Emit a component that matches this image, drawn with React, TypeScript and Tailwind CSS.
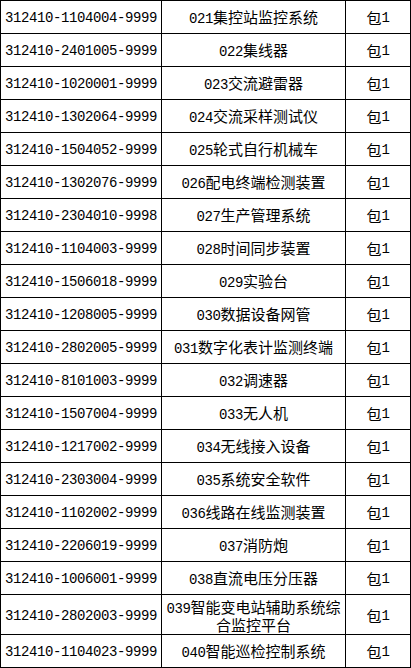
import React from 'react'

const rows = [
  ['312410-1104004-9999', '021集控站监控系统'],
  ['312410-2401005-9999', '022集线器'],
  ['312410-1020001-9999', '023交流避雷器'],
  ['312410-1302064-9999', '024交流采样测试仪'],
  ['312410-1504052-9999', '025轮式自行机械车'],
  ['312410-1302076-9999', '026配电终端检测装置'],
  ['312410-2304010-9998', '027生产管理系统'],
  ['312410-1104003-9999', '028时间同步装置'],
  ['312410-1506018-9999', '029实验台'],
  ['312410-1208005-9999', '030数据设备网管'],
  ['312410-2802005-9999', '031数字化表计监测终端'],
  ['312410-8101003-9999', '032调速器'],
  ['312410-1507004-9999', '033无人机'],
  ['312410-1217002-9999', '034无线接入设备'],
  ['312410-2303004-9999', '035系统安全软件'],
  ['312410-1102002-9999', '036线路在线监测装置'],
  ['312410-2206019-9999', '037消防炮'],
  ['312410-1006001-9999', '038直流电压分压器'],
  ['312410-2802003-9999', '039智能变电站辅助系统综合监控平台'],
  ['312410-1104023-9999', '040智能巡检控制系统'],
]

// ascii runs get a half-width mono face, CJK runs stay at 15px
function Mixed({ text }: { text: string }) {
  const parts = text.match(/[\x00-\x7f]+|[^\x00-\x7f]+/g) || []
  return (
    <>
      {parts.map((p, i) =>
        /^[\x00-\x7f]/.test(p) ? (
          <span key={i} className="font-['Liberation_Mono',monospace] text-[14px] tracking-[-0.4px]">
            {p}
          </span>
        ) : (
          <span key={i}>{p}</span>
        )
      )}
    </>
  )
}

export default function App() {
  return (
    <div className="w-[411px] h-[668px] bg-white overflow-hidden">
      <div className="grid grid-cols-[161px_184px_65px] w-[411px] border-l border-t border-black text-black text-[15px] leading-[16px] font-['Noto_Sans_CJK_SC',sans-serif]">
        {rows.map(([code, name]) => {
          const h = name.length > 16 ? 'h-[40px]' : 'h-[33px]'
          return (
            <React.Fragment key={code}>
              <div className={`${h} border-r border-b border-black flex items-center pl-1 pt-[2px]`}>
                <Mixed text={code} />
              </div>
              <div className={`${h} border-r border-b border-black flex items-center justify-center text-center pt-[2px]`}>
                <div>
                  <Mixed text={name} />
                </div>
              </div>
              <div className={`${h} border-r border-b border-black flex items-center justify-center pt-[2px]`}>
                <Mixed text="包1" />
              </div>
            </React.Fragment>
          )
        })}
      </div>
    </div>
  )
}
